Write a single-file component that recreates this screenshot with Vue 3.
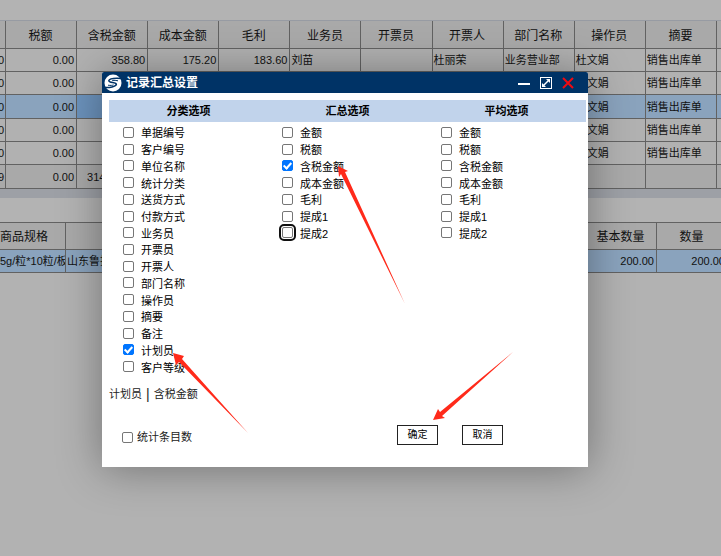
<template>
  <div class="report-page">
    <div class="toolbar"></div>
    <div class="table-wrap">
      <table class="data-table main-table">
        <colgroup>
          <col class="col-edge" />
          <col v-for="name in columns" :key="name" />
          <col class="col-last" />
        </colgroup>
        <thead>
          <tr>
            <th></th>
            <th v-for="name in columns" :key="name">{{ name }}</th>
            <th></th>
          </tr>
        </thead>
        <tbody>
          <tr v-for="(row, i) in rows" :key="i" :class="{ selected: i === 2, summary: i === 5 }">
            <td class="num">{{ row.edge }}</td>
            <td
              v-for="(cell, j) in row.cells"
              :key="j"
              :class="{ num: j < 4, current: i === 2 && j === 1 }"
            >
              {{ cell }}
            </td>
            <td></td>
          </tr>
        </tbody>
      </table>
    </div>
    <div class="splitter"></div>
    <div class="detail-bar"></div>
    <div class="table-wrap">
      <table class="data-table detail-table">
        <colgroup>
          <col class="col-spec" />
          <col class="col-factory" />
          <col />
          <col class="col-qty" />
          <col class="col-qty" />
        </colgroup>
        <thead>
          <tr>
            <th class="spec">商品规格</th>
            <th></th>
            <th></th>
            <th>基本数量</th>
            <th>数量</th>
          </tr>
        </thead>
        <tbody>
          <tr class="selected">
            <td class="spec">5g/粒*10粒/板</td>
            <td>山东鲁抗</td>
            <td></td>
            <td class="num">200.00</td>
            <td class="num">200.00</td>
          </tr>
        </tbody>
      </table>
    </div>

    <section class="dialog" role="dialog" aria-labelledby="dialog-title">
      <header class="dialog-header">
        <svg class="logo" viewBox="0 0 18 18">
          <circle cx="9" cy="9" r="8.5" fill="#fff" />
          <path
            d="M18 4.4C13 4 5.6 3.4 4.8 6.6C4.6 9 12.4 8.2 12.4 10.4C12 12.8 5 13.8 1 13.4"
            fill="none"
            stroke="#003366"
            stroke-width="1.5"
          />
          <path d="M14 6.8C11 6.2 8.4 6.2 8 6.8M4 11.2C6.6 11.6 9 11.4 9.4 10.8" fill="none" stroke="#003366" />
        </svg>
        <h1 id="dialog-title">记录汇总设置</h1>
        <button type="button" class="win-btn" aria-label="最小化">
          <svg viewBox="0 0 12 12"><path d="M0 7H12" stroke="#fff" stroke-width="2" /></svg>
        </button>
        <button type="button" class="win-btn" aria-label="最大化">
          <svg viewBox="0 0 12 12">
            <rect x="0.5" y="0.5" width="11" height="11" fill="none" stroke="#fff" />
            <path d="M3 9L9 3" stroke="#fff" stroke-width="1.4" />
            <path d="M6 2H10V6ZM2 6V10H6Z" fill="#fff" />
          </svg>
        </button>
        <button type="button" class="win-btn" aria-label="关闭">
          <svg viewBox="0 0 12 12"><path d="M1 1L11 11M11 1L1 11" stroke="#f00b12" stroke-width="2" /></svg>
        </button>
      </header>

      <div class="dialog-body">
        <div class="groups">
          <fieldset v-for="group in groups" :key="group.key">
            <legend>{{ group.title }}</legend>
            <div class="options">
              <label v-for="name in group.options" :key="name">
                <input
                  v-model="group.checked"
                  type="checkbox"
                  :value="name"
                  :class="{ focused: group.key === 'sum' && name === '提成2' }"
                />
                <span>{{ name }}</span>
              </label>
            </div>
          </fieldset>
        </div>
        <p class="result">
          <template v-for="(name, i) in result" :key="name">
            <span v-if="i > 0" class="bar">|</span>
            <span>{{ name }}</span>
          </template>
        </p>
        <footer class="dialog-footer">
          <label class="count">
            <input v-model="countItems" type="checkbox" />
            <span>统计条目数</span>
          </label>
          <button type="button" class="btn">确定</button>
          <button type="button" class="btn">取消</button>
        </footer>
      </div>
    </section>

    <svg class="arrows" width="721" height="556" viewBox="0 0 721 556">
      <path d="M338 166L348 171L345 172L405 304L341 174L339 177Z" />
      <path d="M173 353L184 356L182 359L248 433L179 362L176 365Z" />
      <path d="M433 420L438 409L440 412L513 352L442 416L445 418Z" />
    </svg>
  </div>
</template>

<script setup>
import { ref, reactive, computed } from 'vue'

const columns = [
  '税额',
  '含税金额',
  '成本金额',
  '毛利',
  '业务员',
  '开票员',
  '开票人',
  '部门名称',
  '操作员',
  '摘要',
]

const record = ['0.00', '', '', '', '', '', '', '', '杜文娟', '销售出库单']

const rows = [
  {
    edge: '0',
    cells: ['0.00', '358.80', '175.20', '183.60', '刘苗', '', '杜丽荣', '业务营业部', '杜文娟', '销售出库单'],
  },
  { edge: '0', cells: record },
  { edge: '0', cells: record },
  { edge: '0', cells: record },
  { edge: '0', cells: record },
  { edge: '9', cells: ['0.00', '3140000.00', '', '', '', '', '', '', '', ''] },
]

const amounts = ['金额', '税额', '含税金额', '成本金额', '毛利', '提成1', '提成2']

const groups = reactive([
  {
    key: 'type',
    title: '分类选项',
    options: [
      '单据编号',
      '客户编号',
      '单位名称',
      '统计分类',
      '送货方式',
      '付款方式',
      '业务员',
      '开票员',
      '开票人',
      '部门名称',
      '操作员',
      '摘要',
      '备注',
      '计划员',
      '客户等级',
    ],
    checked: ['计划员'],
  },
  { key: 'sum', title: '汇总选项', options: amounts, checked: ['含税金额'] },
  { key: 'avg', title: '平均选项', options: amounts, checked: [] },
])

const countItems = ref(false)

const result = computed(() => groups.flatMap((group) => group.checked))
</script>

<style>
body {
  margin: 0;
  background-color: #b2b2b2;
}
</style>

<style scoped>
.report-page {
  position: relative;
  min-height: 100vh;
  overflow: hidden;
  font-family: 'Liberation Sans', 'Noto Sans CJK SC', sans-serif;
  font-size: 11px;
  color: #111;
  background-color: #b2b2b2;
}
.toolbar {
  height: 20px;
  background-color: #b3b3b3;
  border-bottom: 1px solid #979ba3;
}
.table-wrap {
  overflow: hidden;
  background-color: #b1b1b1;
}
.data-table {
  width: 100%;
  table-layout: fixed;
  border-collapse: separate;
  border-spacing: 0;
}
.data-table th,
.data-table td {
  box-sizing: border-box;
  padding: 0 2px 0 1px;
  border-right: 1px solid #626262;
  border-bottom: 1px solid #626262;
  overflow: hidden;
  white-space: nowrap;
  line-height: 16px;
  text-align: left;
}
.data-table th {
  height: 28px;
  padding-top: 2px;
  font-size: 12px;
  font-weight: normal;
  text-align: center;
  background-color: #a9a9a9;
}
.data-table td {
  height: 23px;
}
.data-table .num {
  text-align: right;
}
.data-table .selected td {
  background-color: #8aa3bd;
}
.data-table .selected .current {
  background-color: #6c93bd;
}
.main-table .selected td,
.main-table .summary td {
  height: 24px;
}
.summary td {
  background-color: #a9a9a9;
}
.col-edge {
  width: 6px;
}
.col-last {
  width: 4px;
}
.main-table th:first-child,
.main-table th:last-child,
.main-table td:last-child {
  padding: 0;
}
.main-table td:last-child,
.main-table th:last-child {
  border-right: 0;
}
.main-table td:first-child {
  padding: 0 2px 0 0;
  direction: rtl;
}
/* the last column runs past the right edge of the grid */
.detail-table {
  width: calc(100% + 7px);
}
.detail-table th {
  border-top: 1px solid #626262;
}
.detail-table .spec {
  padding-left: 0;
  padding-right: 0;
  text-align: left;
}
.col-spec {
  width: 66px;
}
.col-factory {
  width: 90px;
}
.col-qty {
  width: 71px;
}
.splitter {
  height: 9px;
  background-color: #9da0a6;
}
.detail-bar {
  height: 24px;
  background-color: #b3b3b3;
}

.dialog {
  position: absolute;
  top: 72px;
  left: 102px;
  width: 486px;
  color: #000;
  background-color: #fff;
  border-radius: 2px 2px 0 0;
  box-shadow: 0 2px 44px rgba(0, 0, 0, 0.36);
}
.dialog-header {
  display: flex;
  align-items: center;
  gap: 10px;
  height: 21px;
  padding: 0 14px 0 2px;
  background-color: #003366;
  border-radius: 2px 2px 0 0;
}
.logo {
  width: 18px;
  height: 18px;
}
.dialog-header h1 {
  flex: 1;
  margin: 0 0 0 -6px;
  font-size: 12px;
  line-height: 20px;
  color: #fff;
}
.win-btn {
  display: flex;
  width: 12px;
  height: 12px;
  padding: 0;
  background: none;
  border: 0;
}
.win-btn svg {
  width: 12px;
  height: 12px;
}
.dialog-body {
  padding: 7px 2px 22px 7px;
}
.groups {
  display: grid;
  grid-template-columns: repeat(3, 1fr);
  background: linear-gradient(#c1d3eb 22px, transparent 22px);
}
fieldset {
  min-width: 0;
  margin: 0;
  padding: 0;
  border: 0;
}
legend {
  width: 100%;
  padding: 0;
  line-height: 22px;
  font-weight: bold;
  text-align: center;
}
.options {
  display: grid;
  grid-template-rows: repeat(15, 1fr);
  height: 251px;
  margin-top: 2px;
  padding-left: 14px;
}
.options label,
.count {
  display: flex;
  align-items: center;
  line-height: 14px;
}
.options label {
  gap: 7px;
}
.options span {
  padding-top: 2px;
}
input[type='checkbox'] {
  appearance: none;
  display: grid;
  place-items: center;
  width: 11px;
  height: 11px;
  margin: 0;
  background-color: #fff;
  border: 1px solid #767676;
  border-radius: 2px;
}
input[type='checkbox']:checked {
  background-color: #0075ff;
  border-color: #0075ff;
}
input[type='checkbox']:checked::before {
  content: '';
  width: 3px;
  height: 6px;
  margin-bottom: 2px;
  border: solid #fff;
  border-width: 0 2px 2px 0;
  transform: rotate(42deg);
}
input.focused {
  outline: 2px solid #101010;
  outline-offset: 1px;
}
.result {
  display: flex;
  align-items: center;
  gap: 4px;
  margin: 10px 0 22px;
  line-height: 18px;
  color: #222;
}
.result .bar {
  font-size: 14px;
}
.dialog-footer {
  display: flex;
  align-items: center;
  gap: 24px;
  padding: 0 83px 0 13px;
}
.count {
  flex: 1;
  gap: 4px;
  padding-top: 4px;
  color: #222;
}
.btn {
  width: 41px;
  height: 20px;
  padding: 0;
  font-family: inherit;
  font-size: 10px;
  line-height: 16px;
  color: #000;
  background-color: #fff;
  border: 1px solid #222;
}
.arrows {
  position: absolute;
  top: 0;
  left: 0;
  fill: #ff2a1a;
  pointer-events: none;
}
</style>
